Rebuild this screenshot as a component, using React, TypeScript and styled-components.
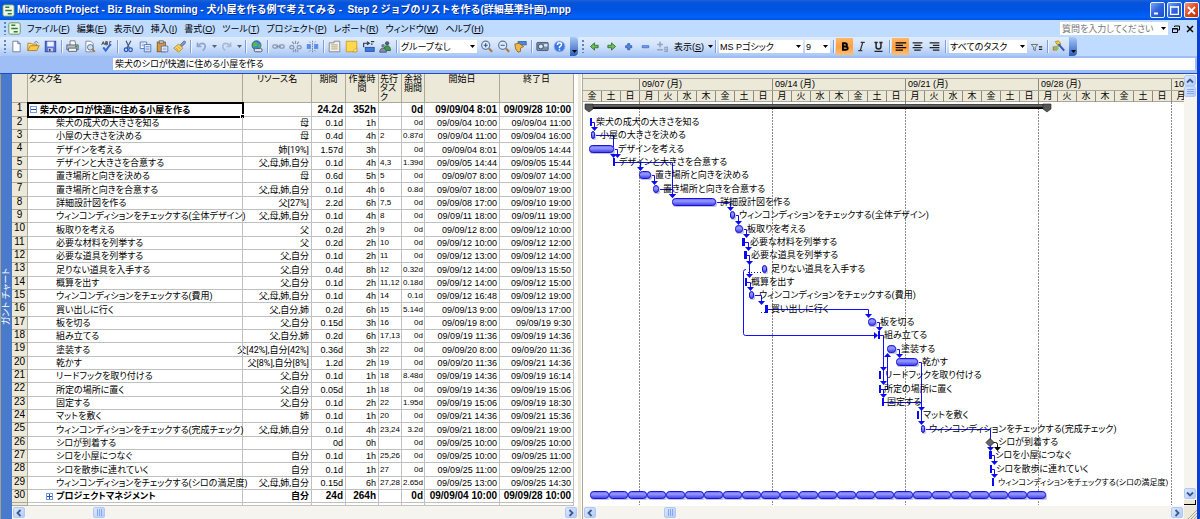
import React from "react";
import styled, { createGlobalStyle, css } from "styled-components";

const FONT = `"Liberation Sans", "Noto Sans CJK JP", sans-serif`;
const COMPACT = `Roboto, "Noto Sans CJK JP", sans-serif`;

const Global = createGlobalStyle`
  *, *::before, *::after { box-sizing: border-box; }
  body {
    margin: 0;
    overflow: hidden;
    background: #fff;
    color: #000;
    font-family: ${FONT};
    font-size: 9px;
    line-height: 12px;
    font-feature-settings: "palt";
  }
  button, input, select { font: inherit; color: inherit; font-feature-settings: inherit; }
`;

const Window = styled.div`
  display: flex;
  flex-direction: column;
  border-right: 3px solid #0a3fd6;
  border-bottom: 1px solid #8c8a7c;
  background: #bfdbff;
`;

/* Title bar */

const TitleBar = styled.header`
  display: flex;
  align-items: center;
  gap: 2px;
  height: 20px;
  margin-right: -3px;
  padding: 0 1px 0 2px;
  background: linear-gradient(#1a62d8 0, #0553dd 3px, #0054e3 10px, #0062fb 17px, #0050d8 20px);
  color: #fff;
`;

const Title = styled.h1`
  flex: 1;
  margin: 0;
  font: bold 10px/16px ${FONT};
  white-space: pre;
  text-shadow: 1px 1px 0 #0a2f92;
`;

const CaptionButtons = styled.div`
  display: flex;
  gap: 2px;
`;

const CaptionButton = styled.button<{ $close?: boolean }>`
  display: flex;
  width: 15px;
  height: 16px;
  padding: 0;
  align-items: center;
  justify-content: center;
  border: 1px solid #e8f0fd;
  border-radius: 2px;
  background: ${(p) =>
    p.$close
      ? "linear-gradient(135deg, #f0987c, #e04a20 50%, #c03208)"
      : "linear-gradient(135deg, #7ba4f4, #2f62dd 50%, #1e4fc8)"};
`;

/* Menu bar */

const MenuBar = styled.nav`
  display: flex;
  align-items: center;
  height: 17px;
  padding: 0 3px 0 4px;
  background: #bfdbff;
`;

const Grip = styled.span`
  flex: none;
  width: 2px;
  height: 13px;
  margin-right: 2px;
  background: repeating-linear-gradient(#5f84c4 0 2px, transparent 2px 4px);
`;

const MenuList = styled.div`
  display: flex;
  flex: 1;
  gap: 7px;
  margin-left: 6px;
`;

const MenuItem = styled.button`
  padding: 0;
  border: 0;
  background: none;
  line-height: 14px;
  white-space: nowrap;
`;

const Key = styled.span`
  text-decoration: underline;
`;

const Ask = styled.div`
  display: flex;
  align-items: center;
  width: 108px;
  height: 13px;
  margin-right: 4px;
  padding-right: 2px;
  background: #fff;
`;

const AskInput = styled.input`
  flex: 1;
  min-width: 0;
  padding: 0 2px;
  border: 0;
  outline: 0;
  background: none;
  &::placeholder { color: #777; opacity: 1; }
`;

const DocButtons = styled.div`
  display: flex;
  gap: 6px;
`;

const PlainButton = styled.button`
  display: flex;
  padding: 0;
  border: 0;
  background: none;
`;

/* Tool bars */

const ToolBars = styled.div`
  display: flex;
  height: 19px;
  background: #bfdbff;
`;

const ToolBar = styled.div`
  display: flex;
  align-items: center;
  padding-left: 4px;
  border-radius: 2px 4px 4px 2px;
  overflow: hidden;
  background: linear-gradient(#e1edfd, #cfe1fb 50%, #a8c6f4);
`;

const Tool = styled.button<{ $on?: boolean }>`
  display: flex;
  flex: none;
  width: 17px;
  height: 17px;
  padding: 0;
  align-items: center;
  justify-content: center;
  border: 0;
  background: none;
  ${(p) =>
    p.$on &&
    css`
      background: linear-gradient(#ffb868, #ff9e40 50%, #ffc072);
    `}
`;

const Drop = styled.button`
  display: flex;
  width: 8px;
  height: 17px;
  padding: 0;
  align-items: center;
  justify-content: center;
  border: 0;
  background: none;
  color: #55617a;
`;

const TextTool = styled.button`
  display: flex;
  align-items: center;
  gap: 4px;
  margin-left: 3px;
  padding: 0;
  border: 0;
  background: none;
  line-height: 14px;
  white-space: nowrap;
`;

const Sep = styled.span`
  flex: none;
  width: 1px;
  height: 13px;
  margin: 0 2px;
  background: #7f9fd4;
  box-shadow: 1px 0 0 #eef5ff;
`;

const Combo = styled.label<{ $w: number }>`
  display: flex;
  align-items: center;
  width: ${(p) => p.$w}px;
  height: 13px;
  margin: 0 1px;
  padding-right: 2px;
  background: #fff;
`;

const ComboSelect = styled.select`
  flex: 1;
  min-width: 0;
  height: 13px;
  padding: 0 1px;
  border: 0;
  outline: 0;
  appearance: none;
  background: none;
`;

const Overflow = styled.button`
  display: flex;
  width: 8px;
  height: 19px;
  margin-left: 2px;
  padding: 0 0 3px;
  align-items: flex-end;
  justify-content: center;
  border: 0;
  background: linear-gradient(#a9c7f5, #5c8ad6 60%, #2c5cb4);
`;

/* Entry bar */

const EntryBar = styled.div`
  display: flex;
  height: 18px;
  padding: 2px 2px 3px 113px;
  border-bottom: 1px solid #1c4ec0;
  background: #9ebef5;
`;

const EntryInput = styled.input`
  flex: 1;
  min-width: 0;
  padding: 0 2px;
  border: 0;
  outline: 0;
  background: #fff;
  line-height: 12px;
`;

/* Work area */

const Work = styled.main`
  display: flex;
  border-left: 1px solid #a3a08d;
  background: #fff;
`;

const ViewStrip = styled.aside`
  display: flex;
  flex: none;
  width: 11px;
  align-items: center;
  justify-content: center;
  background: #4a7acb;
  color: #fff;
  line-height: 11px;
`;

const ViewName = styled.span`
  writing-mode: vertical-rl;
  text-orientation: sideways;
  transform: rotate(180deg);
  white-space: nowrap;
`;

const SheetPane = styled.section`
  display: flex;
  flex: none;
  flex-direction: column;
  width: 566px;
`;

const Sheet = styled.table`
  width: 562px;
  table-layout: fixed;
  border-spacing: 0;
`;

const HeadCell = styled.th<{ $left?: boolean }>`
  height: 28px;
  padding: 1px 1px 0;
  overflow: hidden;
  vertical-align: top;
  text-align: ${(p) => (p.$left ? "left" : "center")};
  font-weight: normal;
  line-height: 9px;
  border-right: 1px solid #aca899;
  border-bottom: 1px solid #aca899;
  background: #ece9d8;
`;

const Row = styled.tr<{ $bold?: boolean }>`
  height: 13px;
  &:nth-child(3n + 1) { height: 14px; }
  &:last-child { height: 3px; }
  ${(p) =>
    p.$bold &&
    css`
      font-weight: bold;
      td { font-size: 10px; }
    `}
`;

const NumCell = styled.th`
  padding: 0;
  text-align: center;
  vertical-align: top;
  font: normal 10px/10px ${FONT};
  border-right: 1px solid #aca899;
  border-bottom: 1px solid #aca899;
  background: #ece9d8;
`;

const Cell = styled.td<{ $align?: "left" | "right"; $pad?: number }>`
  height: inherit;
  padding: 0 2px 0 ${(p) => p.$pad ?? 0}px;
  white-space: nowrap;
  text-align: ${(p) => p.$align ?? "right"};
  line-height: 12px;
  border-right: 1px solid #c0c0c0;
  border-bottom: 1px solid #c0c0c0;
`;

const TightCell = styled(Cell)`
  padding-right: 1px;
  font-size: 8px;
`;

const NameCell = styled(Cell)<{ $active?: boolean }>`
  position: relative;
  ${(p) =>
    p.$active &&
    css`
      outline: 2px solid #000;
      outline-offset: -1px;
      &::after {
        content: "";
        position: absolute;
        right: -2px;
        bottom: -2px;
        width: 4px;
        height: 4px;
        background: #000;
        border: 1px solid #fff;
        border-width: 1px 0 0 1px;
      }
    `}
`;

const NameLine = styled.span`
  display: flex;
  align-items: center;
  gap: 3px;
  height: 12px;
  font-size: 9px;
`;

const WhoLine = styled.span`
  display: flex;
  justify-content: flex-end;
  height: 12px;
  font-family: ${COMPACT};
  font-size: 9px;
`;

const Outline = styled.button`
  display: flex;
  width: 7px;
  height: 7px;
  padding: 0;
  align-items: center;
  justify-content: center;
  border: 1px solid #6f9be8;
  background: #fff;
`;

/* Scroll bars */

const HBar = styled.div`
  display: flex;
  height: 13px;
  padding: 1px;
  background: #f5f4ef;
`;

const VBar = styled.div`
  display: flex;
  flex: none;
  flex-direction: column;
  width: 13px;
  padding: 1px 1px 1px 0;
  background: #f5f4ef;
`;

const ScrollButton = styled.button`
  display: flex;
  flex: none;
  width: 12px;
  height: 11px;
  padding: 0;
  align-items: center;
  justify-content: center;
  border: 1px solid #b0c8f8;
  border-radius: 2px;
  background: linear-gradient(135deg, #dbe7fe, #b4cbf8);
`;

const Thumb = styled(ScrollButton)<{ $offset?: number }>`
  margin-left: ${(p) => p.$offset ?? 0}px;
`;

const Space = styled.span`
  flex: 1;
`;

const SplitBox = styled.span`
  height: 5px;
  margin-top: 1px;
  border-right: 1px solid #000;
  border-bottom: 1px solid #000;
  background: #ece9d8;
`;

const Splitter = styled.div`
  flex: none;
  width: 5px;
  border-right: 1px solid #aca899;
  background: linear-gradient(90deg, #ece9d8 0 3px, #fff 3px 4px);
`;

/* Gantt pane */

const GanttPane = styled.section`
  display: flex;
  flex: 1;
  min-width: 0;
  flex-direction: column;
`;

const GanttUpper = styled.div`
  display: flex;
  flex: 1;
`;

const ChartView = styled.div`
  flex: 1;
  min-width: 0;
  overflow: hidden;
`;

const Scale = styled.div`
  height: 28px;
  padding-top: 4px;
  border-bottom: 1px solid #aca899;
  background: #ece9d8;
`;

const Tier = styled.div`
  display: flex;
  height: 12px;
  border-top: 1px solid #aca899;
`;

const WeekCell = styled.span<{ $days: number }>`
  flex: none;
  width: ${(p) => p.$days * 19}px;
  padding-left: 2px;
  line-height: 11px;
  white-space: nowrap;
  border-right: 1px solid #8d8a7c;
`;

const DayCell = styled.span`
  flex: none;
  width: 19px;
  line-height: 11px;
  text-align: center;
  border-right: 1px solid #8d8a7c;
`;

const Chart = styled.svg`
  display: block;
`;

const Label = styled.text<{ $small?: boolean }>`
  font-family: ${COMPACT};
  font-size: ${(p) => (p.$small ? 8 : 9)}px;
`;

const Corner = styled.span`
  display: flex;
  flex: none;
  width: 13px;
  align-items: flex-end;
  justify-content: flex-end;
  background: #ece9d8;
`;

const Bottom = styled.div`
  display: flex;
`;

const GrowBar = styled(HBar)`
  flex: 1;
`;

/* Data */

type Task = {
  name: string;
  who: string;
  dur: string;
  work: string;
  pred: string;
  slack: string;
  start: string;
  end: string;
};

const t = (
  name: string, who: string, dur: string, work: string,
  pred: string, slack: string, start: string, end: string
): Task => ({ name, who, dur, work, pred, slack, start: `09/09/${start}`, end: `09/09/${end}` });

const tasks: Task[] = [
  t("柴犬のシロが快適に住める小屋を作る", "", "24.2d", "352h", "", "0d", "04 8:01", "28 10:00"),
  t("柴犬の成犬の大きさを知る", "母", "0.1d", "1h", "", "0d", "04 10:00", "04 11:00"),
  t("小屋の大きさを決める", "母", "0.4d", "4h", "2", "0.87d", "04 11:00", "04 16:00"),
  t("デザインを考える", "姉[19%]", "1.57d", "3h", "", "0d", "04 8:01", "05 14:44"),
  t("デザインと大きさを合意する", "父,母,姉,自分", "0.1d", "4h", "4,3", "1.39d", "05 14:44", "05 15:44"),
  t("置き場所と向きを決める", "母", "0.6d", "5h", "5", "0d", "07 8:00", "07 14:00"),
  t("置き場所と向きを合意する", "父,母,姉,自分", "0.1d", "4h", "6", "0.8d", "07 18:00", "07 19:00"),
  t("詳細設計図を作る", "父[27%]", "2.2d", "6h", "7,5", "0d", "08 17:00", "10 19:00"),
  t("ウィンコンディションをチェックする(全体デザイン)", "父,母,姉,自分", "0.1d", "4h", "8", "0d", "11 18:00", "11 19:00"),
  t("板取りを考える", "父", "0.2d", "2h", "9", "0d", "12 8:00", "12 10:00"),
  t("必要な材料を列挙する", "父", "0.2d", "2h", "10", "0d", "12 10:00", "12 12:00"),
  t("必要な道具を列挙する", "父,自分", "0.1d", "2h", "11", "0d", "12 13:00", "12 14:00"),
  t("足りない道具を入手する", "父,自分", "0.4d", "8h", "12", "0.32d", "12 14:00", "13 15:50"),
  t("概算を出す", "父,自分", "0.1d", "2h", "11,12", "0.18d", "12 14:00", "12 15:00"),
  t("ウィンコンディションをチェックする(費用)", "父,母,姉,自分", "0.1d", "4h", "14", "0.1d", "12 16:48", "12 19:00"),
  t("買い出しに行く", "父,自分,姉", "0.2d", "6h", "15", "5.14d", "13 9:00", "13 17:00"),
  t("板を切る", "父,自分", "0.15d", "3h", "16", "0d", "19 8:00", "19 9:30"),
  t("組み立てる", "父,自分,姉", "0.2d", "6h", "17,13", "0d", "19 11:36", "19 14:36"),
  t("塗装する", "父[42%],自分[42%]", "0.36d", "3h", "22", "0d", "20 8:00", "20 11:36"),
  t("乾かす", "父[8%],自分[8%]", "1.2d", "2h", "19", "0d", "20 11:36", "21 14:36"),
  t("リードフックを取り付ける", "父,自分", "0.1d", "1h", "18", "8.48d", "19 14:36", "19 16:14"),
  t("所定の場所に置く", "父,自分", "0.05d", "1h", "18", "0d", "19 14:36", "19 15:06"),
  t("固定する", "父,自分", "0.1d", "2h", "22", "1.95d", "19 15:06", "19 18:30"),
  t("マットを敷く", "姉", "0.1d", "1h", "20", "0d", "21 14:36", "21 15:36"),
  t("ウィンコンディションをチェックする(完成チェック)", "父,母,姉,自分", "0.1d", "4h", "23,24", "3.2d", "21 18:00", "21 19:00"),
  t("シロが到着する", "", "0d", "0h", "", "0d", "25 10:00", "25 10:00"),
  t("シロを小屋につなぐ", "自分", "0.1d", "1h", "25,26", "0d", "25 10:00", "25 11:00"),
  t("シロを散歩に連れていく", "自分", "0.1d", "1h", "27", "0d", "25 11:00", "25 12:00"),
  t("ウィンコンディションをチェックする(シロの満足度)", "父,母,姉,自分", "0.15d", "6h", "27,28", "2.65d", "25 13:00", "25 14:30"),
  t("プロジェクトマネジメント", "自分", "24d", "264h", "", "0d", "04 10:00", "28 10:00"),
];

/* [task id, bar start, bar end, label start], in chart pixels */
const bars: [number, number, number, number][] = [
  [2, 7, 9, 13], [3, 8, 12, 17], [4, 6, 31, 35], [5, 30, 32, 36], [6, 56, 68, 72],
  [7, 70, 76, 80], [8, 89, 133, 137], [9, 147, 152, 156], [10, 152, 160, 164],
  [11, 159, 162, 167], [12, 161, 164, 168], [13, 179, 184, 188], [14, 162, 164, 168],
  [15, 166, 171, 176], [16, 182, 185, 188], [17, 285, 293, 297], [18, 295, 297, 301],
  [19, 304, 313, 318], [20, 313, 335, 339], [21, 296, 298, 302], [22, 296, 298, 301],
  [23, 299, 301, 304], [24, 334, 336, 340], [25, 338, 342, 346], [27, 406, 409, 412],
  [28, 407, 409, 413], [29, 409, 411, 415],
];

/* [from task, x, to task, x]: across on the first row, then along to the second */
const links: [number, number, number, number][] = [
  [2, 9, 3, 11], [3, 12, 5, 30], [4, 31, 5, 34], [5, 32, 6, 57], [5, 32, 8, 89],
  [6, 68, 7, 71], [7, 76, 8, 89], [8, 133, 9, 147], [9, 152, 10, 155], [10, 160, 11, 163],
  [11, 162, 12, 165], [12, 164, 13, 166], [12, 164, 14, 166], [14, 164, 15, 167],
  [15, 171, 16, 178], [16, 185, 17, 285], [17, 293, 18, 296], [18, 297, 21, 300],
  [18, 297, 22, 300], [22, 298, 23, 300], [19, 313, 20, 316], [20, 335, 24, 338],
  [23, 301, 25, 338], [25, 342, 27, 407], [27, 409, 28, 411], [28, 409, 29, 411],
];

const rowY = (n: number) => Math.round(((n - 0.5) * 40) / 3);

const weeks = ["", "09/07 (月)", "09/14 (月)", "09/21 (月)", "09/28 (月)", "10/05 (月)"];
const dayNames = ["月", "火", "水", "木", "金", "土", "日"];
const days = Array.from({ length: 32 }, (_, i) => dayNames[(i + 4) % 7]);

const Bar = ({ row, x1, x2 }: { row: number; x1: number; x2: number }) => {
  const y = rowY(row);
  const w = x2 - x1;
  if (w <= 3) return <rect x={x1} y={y - 4} width={w} height={8} fill="#0a0af0" />;
  return (
    <g>
      <rect x={x1 + 1} y={y - 2} width={w} height={7} rx={2} fill="#c4c4dc" />
      <rect x={x1 + 0.5} y={y - 3.5} width={w - 1} height={7} rx={Math.min(3, w / 2)} fill="url(#bar)" stroke="#1414dc" />
    </g>
  );
};

const GanttChart = () => (
  <Chart width={722} height={403} role="img" aria-label="ガントチャート">
    <defs>
      <linearGradient id="bar" x1="0" y1="0" x2="0" y2="1">
        <stop offset="0" stopColor="#6464f0" />
        <stop offset="0.35" stopColor="#9a9aff" />
        <stop offset="1" stopColor="#3c3ce6" />
      </linearGradient>
      <linearGradient id="summary" x1="0" y1="0" x2="0" y2="1">
        <stop offset="0" stopColor="#333" />
        <stop offset="0.4" stopColor="#777" />
        <stop offset="0.7" stopColor="#111" />
        <stop offset="1" stopColor="#000" />
      </linearGradient>
    </defs>
    {[56, 189, 322, 455, 588].map((x) => (
      <path key={x} d={`M${x + 0.5} 0V403`} stroke="#8a8a8a" strokeDasharray="2 1" />
    ))}
    <rect x={3} y={2} width={464} height={5} fill="url(#summary)" />
    {[2, 460].map((x) => (
      <path key={x} d={`M${x} 2h8v5l-4 3l-4 -3z`} fill="#555" stroke="#222" strokeWidth={0.6} />
    ))}
    <g fill="none" stroke="#1010ff">
      {links.map(([a, x1, b, x2], i) => (
        <path key={i} d={`M${x1} ${rowY(a) + 0.5}H${x2 + 0.5}V${rowY(b) - 5}`} />
      ))}
      <path d={`M163 ${rowY(13) + 0.5}q-2.500 0 -2.500 2V${rowY(18) - 1.5}q0 2 2 2H292`} />
      <path d={`M298 ${rowY(22) + 0.5}H304.500V${rowY(19) + 6}`} />
      <path d={`M165 ${rowY(13) + 3.5}H179M178 ${rowY(16) + 3.5}H182`} strokeDasharray="1 2" />
    </g>
    <g fill="#0a0af0">
      {links.map(([, , b, x], i) => (
        <path key={i} d={`M${x - 3} ${rowY(b) - 8}h7l-3.500 4z`} />
      ))}
      <path d={`M291 ${rowY(18) - 3}v7l4 -3.500z`} />
      <path d={`M301 ${rowY(19) + 8}h7l-3.500 -4z`} />
    </g>
    {bars.map(([row, x1, x2]) => <Bar key={row} row={row} x1={x1} x2={x2} />)}
    <path d={`M410 ${rowY(26) + 0.5}h2.500q2 0 2 2V${rowY(27) - 6}`} fill="none" stroke="#000" />
    <path d={`M411 ${rowY(27) - 8}h7l-3.500 4z`} />
    <path d={`M403 ${rowY(26) + 0.5}l4 -4l4 4l-4 4z`} fill="#666" stroke="#333" />
    {Array.from({ length: 24 }, (_, i) => (
      <Bar key={i} row={30} x1={7 + i * 19} x2={26 + i * 19} />
    ))}
    {bars.map(([row, , , x]) => (
      <Label key={row} x={x} y={rowY(row) + 3} $small={row === 29}>{tasks[row - 1].name}</Label>
    ))}
    <Label x={415} y={rowY(26) + 3}>{tasks[25].name}</Label>
  </Chart>
);

/* Icons */

const Arrow = () => (
  <svg width="5" height="3" viewBox="0 0 5 3"><path d="M0 0h5l-2.500 3z" fill="currentColor" /></svg>
);

const Chevron = ({ turn }: { turn: number }) => (
  <svg width="8" height="8" viewBox="0 0 8 8">
    <path d="M5.500 1L2.500 4l3 3" fill="none" stroke="#3c5a8c" strokeWidth="1.800" transform={`rotate(${turn} 4 4)`} />
  </svg>
);

const ThumbLines = ({ vertical }: { vertical?: boolean }) => (
  <svg width="7" height="7" viewBox="0 0 7 7">
    <path d={vertical ? "M0 1.500h7M0 3.500h7M0 5.500h7" : "M1.500 0v7M3.500 0v7M5.500 0v7"} stroke="#86a8f0" />
  </svg>
);

const icons: Record<string, React.ReactNode> = {
  doc: <><rect x="1" y="1" width="14" height="14" rx="2" fill="#f0f6e8" stroke="#4c8a4c" /><path d="M4 4h5M4 8h8M7 12h5" stroke="#2f7d3a" strokeWidth="2" /></>,
  blank: <path d="M3.500 1.500h6l3 3v10h-9zM9.500 1.500v3h3" fill="#fff" stroke="#5a6f96" />,
  open: <><path d="M1 13V4h4l1 1h6v3" fill="#ffe08a" stroke="#a87818" /><path d="M1 13l3-6h11l-3 6z" fill="#ffc84a" stroke="#a87818" /><path d="M9 3q3-3 5 1" fill="none" stroke="#3868c0" /></>,
  save: <><rect x="1.500" y="1.500" width="13" height="13" fill="#5878d8" stroke="#283c90" /><rect x="4" y="2" width="8" height="6" fill="#eef2ff" /><rect x="5" y="10" width="6" height="4" fill="#c8ccd8" /><rect x="6" y="11" width="2" height="3" fill="#283c90" /></>,
  print: <><path d="M5 6V1h6l1 5" fill="#fff" stroke="#666" /><path d="M1 6h14v6H1z" fill="#b8bcc8" stroke="#4c5464" /><path d="M3 10h10v4H3z" fill="#f4f4f4" stroke="#4c5464" /><rect x="11" y="7" width="3" height="2" fill="#2ea040" /></>,
  preview: <><path d="M3.500 1.500h6l3 3v10h-9z" fill="#fff" stroke="#6a7a9a" /><circle cx="9" cy="9" r="3.500" fill="#c8e0f8" stroke="#4a5a7a" /><path d="M11.500 11.500l3 3" stroke="#a86a20" strokeWidth="2" /></>,
  spell: <><path d="M2 6l2-4l2 4M3 4.500h2M7 2v4h2V4H7h2V2zM14 2h-2v4h2" fill="none" stroke="#333" /><path d="M4 9l3 4l6-8" fill="none" stroke="#3468d8" strokeWidth="2.500" /></>,
  cut: <><path d="M5 1l4 9M11 1L6 10" stroke="#48587c" strokeWidth="1.500" /><circle cx="5" cy="12" r="2.200" fill="none" stroke="#2850b8" strokeWidth="1.500" /><circle cx="10.500" cy="12" r="2.200" fill="none" stroke="#2850b8" strokeWidth="1.500" /></>,
  copy: <><path d="M1.500 2.500h8v8h-8z" fill="#fff" stroke="#3c64b4" /><path d="M6.500 5.500h8v9h-8z" fill="#e8f0ff" stroke="#3c64b4" /><path d="M8 8h5M8 10h5M8 12h5M3 5h3M3 7h3" stroke="#6c90d4" /></>,
  paste: <><rect x="1.500" y="2.500" width="10" height="12" fill="#d89838" stroke="#7c5418" /><rect x="4" y="1" width="5" height="3" fill="#ccc" stroke="#666" /><path d="M6.500 7.500h8v7h-8z" fill="#fff" stroke="#3c64b4" /><path d="M8 10h5M8 12h5" stroke="#6c90d4" /></>,
  brush: <><path d="M9 6l5-5l2 2l-5 5z" fill="#8a9ac0" stroke="#485880" /><path d="M7 5l5 5l-5 5l-6-5z" fill="#ffd860" stroke="#a88028" /><path d="M4 10l3 3M6 8l3 3" stroke="#b88820" /></>,
  undo: <path d="M3 3v5h5M3.500 7.500q4-5 8-2.500q3 4-2 8" fill="none" stroke="#8ea4cc" strokeWidth="2" />,
  redo: <path d="M13 3v5H8M12.500 7.500q-4-5-8-2.500q-3 4 2 8" fill="none" stroke="#a8b8d8" strokeWidth="2" />,
  globe: <><circle cx="8" cy="6.500" r="5.500" fill="#3c88d8" stroke="#28508c" /><path d="M4 4q3-3 5 0t-2 4t-4-1zM10 6l3-1v3l-2 2z" fill="#58b848" /><rect x="5" y="10.500" width="10" height="4" rx="2" fill="#dde4ee" stroke="#506078" strokeWidth="1.200" /></>,
  link: <g fill="none" stroke="#8a96ae" strokeWidth="1.600"><rect x="1" y="6" width="6" height="4" rx="2" /><rect x="9" y="6" width="6" height="4" rx="2" /><path d="M5 8h6" /></g>,
  unlink: <g fill="none" stroke="#8a96ae" strokeWidth="1.500"><rect x="1" y="7" width="5" height="4" rx="2" /><rect x="10" y="7" width="5" height="4" rx="2" /><path d="M8 1v4M4 2l2 3M12 2l-2 3M8 11v4M5 15l1-3M11 15l-1-3" /></g>,
  split: <><rect x="1" y="5" width="5" height="6" fill="#5c8ce8" /><rect x="10" y="5" width="5" height="6" fill="#5c8ce8" /><path d="M8 1v14M4 2l2 2M12 2l-2 2M4 14l2-2M12 14l-2-2" stroke="#5c6c90" strokeDasharray="2 1" /></>,
  info: <><path d="M1.500 3.500h6v-2h7v13h-13z" fill="#f4f2e4" stroke="#707890" /><path d="M4 6h8M4 8.500h8M4 11h8" stroke="#a09868" /></>,
  note: <><path d="M1.500 1.500h13v13h-13z" fill="#ffd84c" stroke="#c89820" /><path d="M9 14.500l5.500-5v5z" fill="#fff4b8" stroke="#c89820" /></>,
  assign: <><rect x="4" y="9" width="11" height="5" fill="#3c78e0" stroke="#2048a0" /><path d="M2 9V4h6M6 2l3 2l-3 2M11 2h4M11 5h2" fill="none" stroke="#303848" strokeWidth="1.400" /></>,
  people: <><circle cx="10" cy="4" r="2.600" fill="#4a5a70" /><path d="M6 13q0-6 4-6t4 6z" fill="#38a048" stroke="#205828" /><circle cx="5" cy="7" r="2.200" fill="#6a7890" /><path d="M1 15q0-5 4-5t4 5z" fill="#8490a8" stroke="#404c60" /></>,
  zoomin: <><circle cx="7" cy="6.500" r="5" fill="#d8ecff" stroke="#6a7894" strokeWidth="1.500" /><path d="M7 4v5M4.500 6.500h5" stroke="#3050a0" strokeWidth="1.400" /><path d="M11 10.500l4 4" stroke="#a87838" strokeWidth="2.500" /></>,
  zoomout: <><circle cx="7" cy="6.500" r="5" fill="#d8ecff" stroke="#6a7894" strokeWidth="1.500" /><path d="M4.500 6.500h5" stroke="#3050a0" strokeWidth="1.400" /><path d="M11 10.500l4 4" stroke="#a87838" strokeWidth="2.500" /></>,
  goto: <><rect x="5" y="2" width="10" height="4" fill="#5088e0" stroke="#2c58a8" /><path d="M1 5l5-1l6 4l-4 2v4l-3 1l-3-4z" fill="#f0b848" stroke="#906018" /></>,
  camera: <><rect x="1" y="3" width="14" height="10" rx="1" fill="#7c8ca8" stroke="#3c4c68" /><circle cx="6" cy="8" r="3" fill="#d8e8f8" stroke="#2c3c58" /><rect x="10" y="5" width="4" height="3" fill="#d8e8f8" /></>,
  help: <><circle cx="8" cy="8" r="6.800" fill="#3c78e0" stroke="#a8c0f0" /><path d="M5.500 6q0-2.500 2.500-2.500t2.500 2q0 1.500-2.500 3V10M8 11.500v1.500" fill="none" stroke="#fff" strokeWidth="1.800" /></>,
  left: <path d="M3 8l5-4.500v3h4.500v3H8v3z" fill="#6cc058" stroke="#306828" />,
  right: <path d="M13 8L8 3.500v3H3.500v3H8v3z" fill="#6cc058" stroke="#306828" />,
  plus: <path d="M7 4.500h2.500v2.500h2.500v2.500h-2.500v2.500h-2.500v-2.500h-2.500v-2.500h2.500z" fill="#5c88e0" stroke="#2c58b8" />,
  minus: <path d="M4 7h8v2.500h-8z" fill="#80a4ec" stroke="#3c68c8" />,
  pm: <><path d="M5 2v7M1.500 5.500h7M1.500 12h7" stroke="#98a4bc" strokeWidth="2" /><path d="M14 9h-3v3h3zm0-1v6h-4" fill="none" stroke="#98a4bc" strokeWidth="1.500" /></>,
  bold: <path d="M5 4h3.500q2.500 0 2.500 2T8.500 8H6h3q3 0 3 2T9 12H5M6 4v8" fill="none" stroke="#000" strokeWidth="2.200" />,
  italic: <path d="M7 3h5M4 13h5M9.500 3l-3 10" stroke="#333" strokeWidth="1.600" />,
  underline: <path d="M3 3h4M9 3h4M5 3v5q0 3 3 3t3-3V3M3 14h10" fill="none" stroke="#222" strokeWidth="1.800" />,
  alignL: <path d="M2 3.500h13M2 6.500h9M2 9.500h13M2 12.500h9" stroke="#000" strokeWidth="1.500" />,
  alignC: <path d="M2 3.500h12M4 6.500h8M2 9.500h12M4 12.500h8" stroke="#222" strokeWidth="1.500" />,
  alignR: <path d="M2 3.500h12M6 6.500h8M2 9.500h12M6 12.500h8" stroke="#222" strokeWidth="1.500" />,
  filter: <><path d="M1.500 5.500h8l-3 3.500v4l-2-1V9z" fill="#dfe4ee" stroke="#505868" /><path d="M11 8.500h4M11 11.500h4" stroke="#222" strokeWidth="1.600" /></>,
  wand: <><path d="M1 8h5v5H1z" fill="#e05848" /><circle cx="5" cy="10" r="3" fill="#88c058" /><path d="M4 2l4-1l3 4l-3 3z" fill="#f8c840" stroke="#b08818" /><path d="M8 5l7 8" stroke="#3858b8" strokeWidth="2.500" /></>,
};

const Icon = ({ name }: { name: string }) => (
  <svg width="13" height="13" viewBox="0 0 16 16">{icons[name]}</svg>
);

const Tools = ({ names }: { names: [string, string][] }) => (
  <>
    {names.map(([name, label]) => (
      <Tool key={name} aria-label={label} $on={name === "bold" || name === "alignL"}><Icon name={name} /></Tool>
    ))}
  </>
);

const Picker = ({ label, value, width }: { label: string; value: string; width: number }) => (
  <Combo $w={width}>
    <ComboSelect aria-label={label} defaultValue={value}><option>{value}</option></ComboSelect>
    <Arrow />
  </Combo>
);

const menus: [string, string][] = [
  ["ファイル", "F"], ["編集", "E"], ["表示", "V"], ["挿入", "I"], ["書式", "O"],
  ["ツール", "T"], ["プロジェクト", "P"], ["レポート", "R"], ["ウィンドウ", "W"], ["ヘルプ", "H"],
];

const columnWidths = [16, 215, 69, 34, 33, 23, 23, 75, 74];

const TaskSheet = () => (
  <Sheet>
    <colgroup>
      {columnWidths.map((w, i) => <col key={i} width={w} />)}
    </colgroup>
    <thead>
      <tr>
        <HeadCell aria-label="ID" />
        <HeadCell $left>タスク名</HeadCell>
        <HeadCell>リソース名</HeadCell>
        <HeadCell>期間</HeadCell>
        <HeadCell>作業時間</HeadCell>
        <HeadCell $left>先行タスク</HeadCell>
        <HeadCell>余裕期間</HeadCell>
        <HeadCell>開始日</HeadCell>
        <HeadCell>終了日</HeadCell>
      </tr>
    </thead>
    <tbody>
      {tasks.map((task, i) => {
        const top = i === 0;
        const summary = top || i === 29;
        return (
          <Row key={i} $bold={summary}>
            <NumCell scope="row">{i + 1}</NumCell>
            <NameCell $align="left" $pad={top ? 2 : summary ? 18 : 28} $active={top}>
              <NameLine>
                {summary && (
                  <Outline aria-label={top ? "折りたたむ" : "展開する"}>
                    <svg width="5" height="5" viewBox="0 0 5 5">
                      <path d={top ? "M0 2.500h5" : "M0 2.500h5M2.500 0v5"} stroke="#2c50a0" />
                    </svg>
                  </Outline>
                )}
                {task.name}
              </NameLine>
            </NameCell>
            <Cell><WhoLine>{task.who}</WhoLine></Cell>
            <Cell>{task.dur}</Cell>
            <Cell>{task.work}</Cell>
            <TightCell $align="left" $pad={1}>{task.pred}</TightCell>
            <TightCell>{task.slack}</TightCell>
            <Cell>{task.start}</Cell>
            <Cell>{task.end}</Cell>
          </Row>
        );
      })}
      <Row aria-hidden>
        <NumCell />
        {columnWidths.slice(1).map((w, i) => <Cell key={i} />)}
      </Row>
    </tbody>
  </Sheet>
);

const ScrollParts = () => (
  <>
    <ScrollButton aria-label="左へ"><Chevron turn={0} /></ScrollButton>
    <Thumb $offset={68} aria-label="横スクロール"><ThumbLines /></Thumb>
    <Space />
    <ScrollButton aria-label="右へ"><Chevron turn={180} /></ScrollButton>
  </>
);

export default function App() {
  return (
    <Window>
      <Global />
      <TitleBar>
        <Icon name="doc" />
        <Title>Microsoft Project - Biz Brain Storming - 犬小屋を作る例で考えてみる -  Step 2 ジョブのリストを作る(詳細基準計画).mpp</Title>
        <CaptionButtons>
          <CaptionButton aria-label="最小化">
            <svg width="9" height="9"><path d="M1 7.500h4" stroke="#fff" strokeWidth="2" /></svg>
          </CaptionButton>
          <CaptionButton aria-label="最大化">
            <svg width="9" height="9"><path d="M.5 1h8M.5 0v8.500h8V0" fill="none" stroke="#fff" strokeWidth="1.500" /></svg>
          </CaptionButton>
          <CaptionButton $close aria-label="閉じる">
            <svg width="9" height="9"><path d="M1 1l7 7M8 1L1 8" stroke="#fff" strokeWidth="1.800" /></svg>
          </CaptionButton>
        </CaptionButtons>
      </TitleBar>

      <MenuBar>
        <Grip />
        <Icon name="doc" />
        <MenuList>
          {menus.map(([name, key]) => (
            <MenuItem key={key}>{name}(<Key>{key}</Key>)</MenuItem>
          ))}
        </MenuList>
        <Ask>
          <AskInput aria-label="質問" placeholder="質問を入力してください" />
          <Arrow />
        </Ask>
        <DocButtons>
          <PlainButton aria-label="元に戻す">
            <svg width="8" height="8"><path d="M2.500 2V1h5v4H6M.5 3.500h5v4h-5zM.5 4h5" fill="none" stroke="#000" /></svg>
          </PlainButton>
          <PlainButton aria-label="文書を閉じる">
            <svg width="8" height="8"><path d="M1 1l6 6M7 1L1 7" stroke="#000" strokeWidth="1.500" /></svg>
          </PlainButton>
        </DocButtons>
      </MenuBar>

      <ToolBars>
        <ToolBar role="toolbar" aria-label="標準">
          <Grip />
          <Tools names={[["blank", "新規"], ["open", "開く"], ["save", "保存"]]} />
          <Sep />
          <Tools names={[["print", "印刷"], ["preview", "プレビュー"], ["spell", "スペル チェック"]]} />
          <Sep />
          <Tools names={[["cut", "切り取り"], ["copy", "コピー"], ["paste", "貼り付け"], ["brush", "書式のコピー"]]} />
          <Sep />
          <Tools names={[["undo", "元に戻す"]]} />
          <Drop aria-label="元に戻す一覧"><Arrow /></Drop>
          <Tools names={[["redo", "やり直し"]]} />
          <Drop aria-label="やり直し一覧"><Arrow /></Drop>
          <Sep />
          <Tools names={[["globe", "ハイパーリンク"]]} />
          <Sep />
          <Tools names={[["link", "リンク"], ["unlink", "リンク解除"], ["split", "分割"]]} />
          <Sep />
          <Tools names={[["info", "タスク情報"], ["note", "メモ"], ["assign", "割り当て"], ["people", "リソース"]]} />
          <Sep />
          <Picker label="グループ" value="グループなし" width={77} />
          <Tools names={[["zoomin", "拡大"], ["zoomout", "縮小"], ["goto", "タスクへ移動"]]} />
          <Sep />
          <Tools names={[["camera", "図のコピー"], ["help", "ヘルプ"]]} />
          <Overflow aria-label="標準のオプション"><Arrow /></Overflow>
        </ToolBar>
        <ToolBar role="toolbar" aria-label="書式設定">
          <Grip />
          <Tools names={[["left", "レベル上げ"], ["right", "レベル下げ"], ["plus", "表示"], ["minus", "非表示"], ["pm", "アウトライン"]]} />
          <TextTool><span>表示(<Key>S</Key>)</span><Arrow /></TextTool>
          <Sep />
          <Picker label="フォント" value="MS Pゴシック" width={84} />
          <Picker label="サイズ" value="9" width={25} />
          <Sep />
          <Tools names={[["bold", "太字"], ["italic", "斜体"], ["underline", "下線"]]} />
          <Sep />
          <Tools names={[["alignL", "左揃え"], ["alignC", "中央揃え"], ["alignR", "右揃え"]]} />
          <Sep />
          <Picker label="フィルタ" value="すべてのタスク" width={78} />
          <Tools names={[["filter", "オートフィルタ"]]} />
          <Sep />
          <Tools names={[["wand", "ガント チャート ウィザード"]]} />
          <Overflow aria-label="書式設定のオプション"><Arrow /></Overflow>
        </ToolBar>
      </ToolBars>

      <EntryBar>
        <EntryInput aria-label="入力" defaultValue="柴犬のシロが快適に住める小屋を作る" />
      </EntryBar>

      <Work>
        <ViewStrip><ViewName>ガント チャート</ViewName></ViewStrip>
        <SheetPane>
          <TaskSheet />
          <HBar><ScrollParts /></HBar>
        </SheetPane>
        <Splitter />
        <GanttPane>
          <GanttUpper>
            <ChartView>
              <Scale>
                <Tier>
                  {weeks.map((w, i) => <WeekCell key={i} $days={i ? 7 : 3}>{w}</WeekCell>)}
                </Tier>
                <Tier>
                  {days.map((d, i) => <DayCell key={i}>{d}</DayCell>)}
                </Tier>
              </Scale>
              <GanttChart />
            </ChartView>
            <VBar>
              <ScrollButton aria-label="上へ"><Chevron turn={90} /></ScrollButton>
              <Thumb aria-label="縦スクロール"><ThumbLines vertical /></Thumb>
              <Space />
              <ScrollButton aria-label="下へ"><Chevron turn={270} /></ScrollButton>
              <SplitBox />
            </VBar>
          </GanttUpper>
          <Bottom>
            <GrowBar><ScrollParts /></GrowBar>
            <Corner>
              <svg width="11" height="11"><path d="M2 11l9-9M5 11l6-6M8 11l3-3" stroke="#aca899" /></svg>
            </Corner>
          </Bottom>
        </GanttPane>
      </Work>
    </Window>
  );
}
